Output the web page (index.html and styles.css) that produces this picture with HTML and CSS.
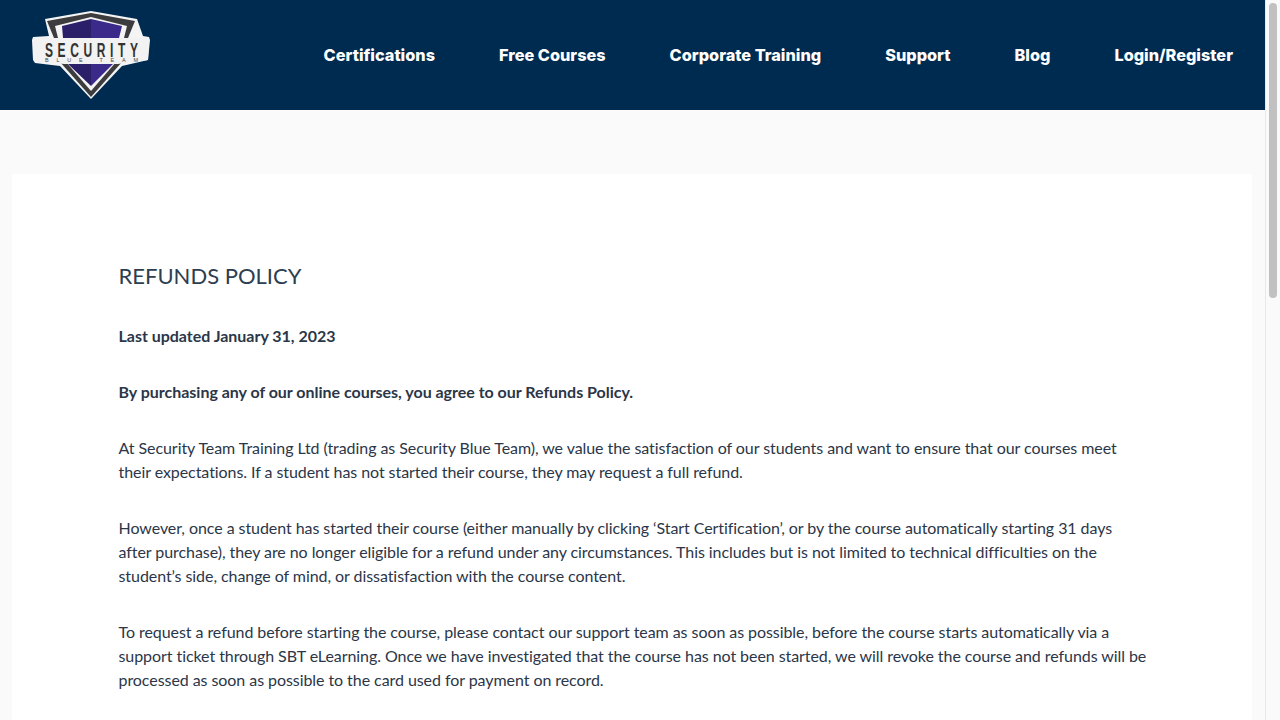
FILE: index.html
```html
<!DOCTYPE html>
<html lang="en">
<head>
<meta charset="utf-8">
<title>Refunds Policy</title>
<link rel="stylesheet" href="styles.css">
</head>
<body>
<div class="page">
  <header class="site-header">
    <a class="logo" href="#" aria-label="Security Blue Team">
      <svg width="122" height="92" viewBox="30 8 122 92">
        <path d="M91 11 L137 19 L143 36 L149 37 L150 40 L148 60 L122 66 L91 99 L60 66 L35 63 L33 60 L32 40 L33 37 L49 36 L45 19 Z" fill="#f4f4f4"/>
        <path d="M47 21 L91 13 L135 21 L128 38 L54 38 Z" fill="#3c3b3d"/>
        <path d="M60 62 L122 62 L91 97 Z" fill="#3c3b3d"/>
        <path d="M55 26 L91 17 L127 26 L124 38 L58 38 Z" fill="#f4f4f4"/>
        <path d="M66 62 L116 62 L91 91 Z" fill="#f4f4f4"/>
        <path d="M62 26 L91 19 L91 86 L68 64 L63 38 Z" fill="#2c1f6a"/>
        <path d="M91 19 L122 26 L119 38 L113 64 L91 86 Z" fill="#3b2a8a"/>
        <path class="logo-band" d="M33 38 L149 38 L148 60 L118 64 L64 64 L35 61 Z"/>
        <text class="logo-main" transform="translate(45 56.5) scale(0.6 1)" textLength="155" lengthAdjust="spacing">SECURITY</text>
        <text class="logo-sub" x="45" y="62" textLength="93">BLUE TEAM</text>
      </svg>
    </a>
    <nav class="main-nav">
      <a href="#">Certifications</a>
      <a href="#">Free Courses</a>
      <a href="#">Corporate Training</a>
      <a href="#">Support</a>
      <a href="#">Blog</a>
      <a href="#">Login/Register</a>
    </nav>
  </header>
  <main class="content">
    <article class="card">
      <h1>REFUNDS POLICY</h1>
      <p class="lead"><strong>Last updated January 31, 2023</strong></p>
      <p class="lead"><strong>By purchasing any of our online courses, you agree to our Refunds Policy.</strong></p>
      <p>At Security Team Training Ltd (trading as Security Blue Team), we value the satisfaction of our students and want to ensure that our courses meet their expectations. If a student has not started their course, they may request a full refund.</p>
      <p>However, once a student has started their course (either manually by clicking ‘Start Certification’, or by the course automatically starting 31 days after purchase), they are no longer eligible for a refund under any circumstances. This includes but is not limited to technical difficulties on the student’s side, change of mind, or dissatisfaction with the course content.</p>
      <p>To request a refund before starting the course, please contact our support team as soon as possible, before the course starts automatically via a support ticket through SBT eLearning. Once we have investigated that the course has not been started, we will revoke the course and refunds will be processed as soon as possible to the card used for payment on record.</p>
    </article>
  </main>
</div>
<div class="scrollbar"><div class="scroll-thumb"></div></div>
</body>
</html>
```
FILE: styles.css
```css
html, body {
  margin: 0;
  height: 720px;
  overflow: hidden;
}
body {
  display: flex;
  background: #fafafa;
  font-family: Lato, "Liberation Sans", sans-serif;
  color: #2b3648;
}
.page {
  flex: 1;
  min-width: 0;
}
.site-header {
  height: 110px;
  background: #002b50;
  display: flex;
  align-items: center;
  justify-content: space-between;
  padding: 0 32px 0 30px;
}
.logo {
  display: block;
  height: 92px;
  margin-top: -2px;
}
.main-nav {
  display: flex;
  gap: 64px;
}
.main-nav a {
  color: #fff;
  text-decoration: none;
  font-family: Inter, "Open Sans", sans-serif;
  font-weight: 800;
  font-size: 16.3px;
  line-height: 24px;
}
.logo-band {
  fill: #f2f2f2;
}
.logo-main {
  font-family: "Liberation Sans", sans-serif;
  font-weight: 700;
  font-size: 20px;
  fill: #333;
}
.logo-sub {
  font-family: "Liberation Sans", sans-serif;
  font-size: 5.5px;
  fill: #444;
}
.content {
  padding: 64px 13px 0 12px;
}
.card {
  background: #fff;
  padding: 85.5px 104.5px 64px 106.5px;
}
.card h1 {
  margin: 0 0 32px;
  font-size: 22px;
  font-weight: 400;
  line-height: 32px;
  padding-bottom: 0.5px;
  color: #2d3e50;
}
.card p {
  margin: 0 0 32px;
  font-size: 16px;
  line-height: 24px;
  letter-spacing: -0.065px;
}
.card p.lead {
  letter-spacing: -0.02px;
}
.scrollbar {
  width: 15px;
  flex: none;
  box-sizing: border-box;
  border-left: 1px solid #e8e8e8;
  padding: 3px 3px 0 3px;
  background: #fafafa;
}
.scroll-thumb {
  height: 295px;
  border-radius: 4px;
  background: #c1c1c1;
}
```
